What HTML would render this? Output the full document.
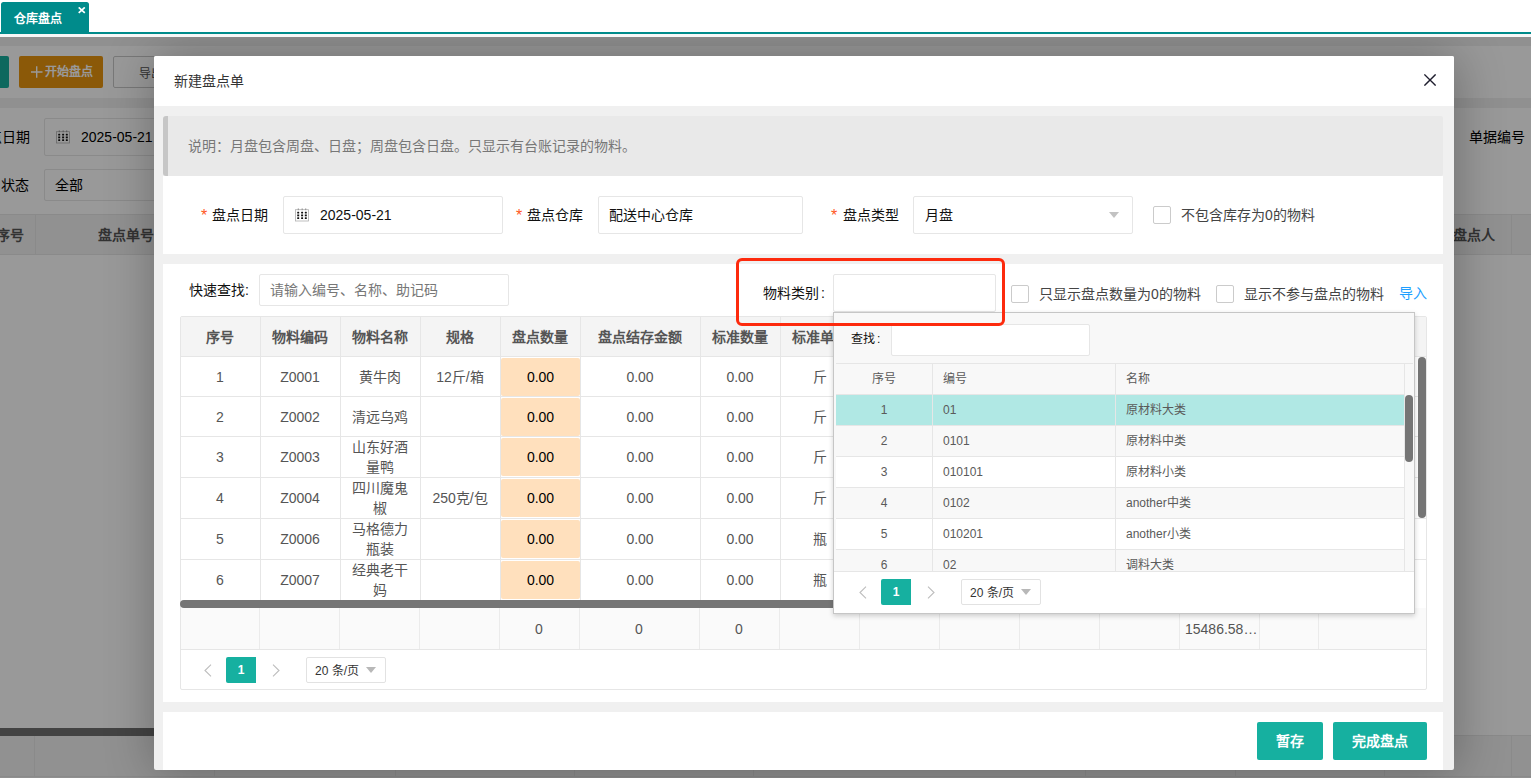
<!DOCTYPE html>
<html lang="zh-CN">
<head>
<meta charset="utf-8">
<title>仓库盘点</title>
<style>
*{box-sizing:border-box;margin:0;padding:0}
html,body{width:1531px;height:778px;overflow:hidden;background:#fff}
body{font-family:"Liberation Sans",sans-serif;font-size:14px;color:#333;position:relative}
.a{position:absolute}
.t{position:absolute;white-space:nowrap;line-height:20px;height:20px}
.b{font-weight:bold}
/* page behind */
#tab{left:1px;top:2px;width:88px;height:31px;background:#008b8b;border-radius:2.5px 2.5px 0 0}
#tabline{left:0;top:32px;width:1531px;height:2px;background:#008b8b}
#page{left:0;top:0;width:1531px;height:778px;background:#f0f0f0;overflow:hidden;clip-path:inset(37px 0 0 0)}
#layer{left:0;top:0;width:1531px;height:778px;clip-path:inset(37px 0 0 0)}
#mask{left:0;top:37px;width:1531px;height:741px;background:rgba(0,0,0,.4)}
.card{position:absolute;background:#fff}
.inp{position:absolute;background:#fff;border:1px solid #e6e6e6;border-radius:2px}
.btn{position:absolute;border-radius:2px;color:#fff;text-align:center}
/* modal */
#modal{left:154px;top:56px;width:1300px;height:714px;background:#f0f0f0;border-radius:2px;box-shadow:1px 1px 50px rgba(0,0,0,.3)}
.lbl{color:#111}
.star{color:#ff5722;font-size:16px}
.cb{position:absolute;width:18px;height:18px;border:1px solid #cbcbcb;border-radius:2px;background:#fff}
.tri{position:absolute;width:0;height:0;border-left:5.5px solid transparent;border-right:5.5px solid transparent;border-top:6px solid #c2c2c2}
.vl{position:absolute;width:1px;background:#e6e6e6}
.hl{position:absolute;height:1px;background:#e6e6e6}
.c{position:absolute;text-align:center;white-space:nowrap;line-height:20px;color:#555}
.or{position:absolute;left:501px;width:79px;height:38px;background:#ffe0bd;border-radius:2px;color:#000;text-align:center;line-height:38px}
.pg1{position:absolute;width:30px;height:26px;background:#16b0a0;color:#fff;font-weight:bold;font-size:12px;line-height:26px;text-align:center;border-radius:2px 0 0 2px}
.pgs{position:absolute;width:80px;height:26px;border:1px solid #e2e2e2;border-radius:2px;background:#fff;font-size:12px;line-height:26px;color:#333;padding-left:8px}
.s12{font-size:12px;color:#5a5a5a}
</style>
</head>
<body>
<!-- tab bar -->
<div class="a" id="tab"></div>
<div class="t b" style="left:14px;top:8.5px;font-size:12px;color:#fff">仓库盘点</div>
<svg class="a" style="left:78px;top:7px" width="8" height="7" viewBox="0 0 8 7"><path d="M0.7 0.4L6.8 5.9M6.8 0.4L0.7 5.9" stroke="#fff" stroke-width="1.7" fill="none"/></svg>
<div class="a" id="tabline"></div>
<div class="a" style="left:0;top:34px;width:1531px;height:3px;background:#f7f7f7"></div>

<!-- page behind modal -->
<div class="a" id="page">
<div class="card" style="left:0;top:46px;width:1531px;height:52px"></div>
<div class="btn" style="left:-60px;top:56px;width:69px;height:32px;background:#17ad9d"></div>
<div class="btn b" style="left:19px;top:56px;width:84px;height:32px;background:#e8940e;font-size:12px;line-height:32px;padding-left:16px">开始盘点</div>
<svg class="a" style="left:31px;top:66px" width="12" height="12" viewBox="0 0 12 12"><path d="M0 6H11.5M5.7 0.3V11.7" stroke="#fff" stroke-width="1.4" fill="none"/></svg>
<div class="a" style="left:113px;top:56px;width:80px;height:32px;border:1px solid #c9c9c9;border-radius:2px;background:#fff"></div>
<div class="t" style="left:139px;top:63.5px;font-size:12px;color:#555">导出</div>
<div class="card" style="left:0;top:108px;width:1531px;height:668px"></div>
<div class="t" style="left:-26px;top:127px;color:#000">盘点日期</div>
<div class="inp" style="left:44px;top:118px;width:220px;height:38px"></div>
<svg class="a" style="left:56px;top:130px" width="14" height="14" viewBox="0 0 14 14"><rect x="0.5" y="1.7" width="13" height="11.3" fill="none" stroke="#b0b0b0" stroke-width="0.8"/><g fill="#111"><rect x="2.2" y="3.8" width="2" height="1.7" rx=".5"/><rect x="6.1" y="3.8" width="2" height="1.7" rx=".5"/><rect x="9.8" y="3.8" width="2" height="1.7" rx=".5"/><rect x="2.2" y="6.5" width="2" height="1.8"/><rect x="6.1" y="6.5" width="2" height="1.8"/><rect x="9.8" y="6.5" width="2" height="1.8"/><rect x="2.2" y="9.3" width="2" height="1.7" rx=".5"/><rect x="6.1" y="9.3" width="2" height="1.7" rx=".5"/><rect x="9.8" y="9.3" width="2" height="1.7" rx=".5"/></g><g fill="#888"><rect x="2.8" y="0.4" width=".9" height="1.8"/><rect x="6.7" y="0.4" width=".9" height="1.8"/><rect x="10.3" y="0.4" width=".9" height="1.8"/></g></svg>
<div class="t" style="left:81px;top:127px;color:#000">2025-05-21</div>
<div class="t" style="left:1px;top:175px;color:#000">状态</div>
<div class="inp" style="left:44px;top:169px;width:220px;height:32px"></div>
<div class="t" style="left:55px;top:175px;color:#000">全部</div>
<div class="t" style="left:1469px;top:127px;color:#000">单据编号</div>
<div class="a" style="left:0;top:214px;width:1531px;height:41px;background:#f2f2f2;border-top:1px solid #e6e6e6;border-bottom:1px solid #e6e6e6"></div>
<div class="t b" style="left:-4px;top:225px;color:#555">序号</div>
<div class="t b" style="left:98px;top:225px;color:#555">盘点单号</div>
<div class="t b" style="left:1453px;top:225px;color:#555">盘点人</div>
<div class="vl" style="left:35px;top:214px;height:41px"></div>
<div class="vl" style="left:1511px;top:214px;height:41px"></div>
<div class="a" style="left:0;top:728px;width:1440px;height:8px;background:#707070"></div>
<div class="a" style="left:0;top:736px;width:1531px;height:41px;background:#f2f2f2;border-bottom:1px solid #e6e6e6"></div>
<div class="hl" style="left:1440px;top:735px;width:91px"></div>
<div class="vl" style="left:34px;top:736px;height:40px"></div>
<div class="vl" style="left:214px;top:736px;height:40px"></div>
<div class="vl" style="left:395px;top:736px;height:40px"></div>
<div class="vl" style="left:574px;top:736px;height:40px"></div>
<div class="vl" style="left:753px;top:736px;height:40px"></div>
<div class="vl" style="left:1085px;top:736px;height:40px"></div>
<div class="vl" style="left:1235px;top:736px;height:40px"></div>
<div class="vl" style="left:1384px;top:736px;height:40px"></div>
<div class="vl" style="left:1511px;top:736px;height:40px"></div>
</div>
<div class="a" id="layer">
<div class="a" id="mask"></div>
<div class="a" id="modal"></div>
<div class="card" style="left:154px;top:56px;width:1300px;height:50px;border-radius:2px 2px 0 0"></div>
<div class="t" style="left:174px;top:71px;color:#333">新建盘点单</div>
<svg class="a" style="left:1424px;top:74px" width="12" height="12" viewBox="0 0 12 12"><path d="M0.9 0.9L11.1 11.1M11.1 0.9L0.9 11.1" stroke="#1f1e2e" stroke-width="1.4" stroke-linecap="square" fill="none"/></svg>
<div class="a" style="left:163px;top:116px;width:1280px;height:60px;background:#e9e9e9;border-left:5px solid #c6c6c6;border-radius:3px 2px 2px 3px"></div>
<div class="t" style="left:188px;top:136px;color:#777">说明：月盘包含周盘、日盘；周盘包含日盘。只显示有台账记录的物料。</div>
<div class="card" style="left:163px;top:176px;width:1280px;height:78px"></div>
<div class="t star" style="left:201px;top:206px">*</div>
<div class="t lbl" style="left:212px;top:205px">盘点日期</div>
<div class="inp" style="left:283px;top:196px;width:220px;height:38px"></div>
<svg class="a" style="left:295px;top:208px" width="14" height="14" viewBox="0 0 14 14"><rect x="0.5" y="1.7" width="13" height="11.3" fill="none" stroke="#b0b0b0" stroke-width="0.8"/><g fill="#111"><rect x="2.2" y="3.8" width="2" height="1.7" rx=".5"/><rect x="6.1" y="3.8" width="2" height="1.7" rx=".5"/><rect x="9.8" y="3.8" width="2" height="1.7" rx=".5"/><rect x="2.2" y="6.5" width="2" height="1.8"/><rect x="6.1" y="6.5" width="2" height="1.8"/><rect x="9.8" y="6.5" width="2" height="1.8"/><rect x="2.2" y="9.3" width="2" height="1.7" rx=".5"/><rect x="6.1" y="9.3" width="2" height="1.7" rx=".5"/><rect x="9.8" y="9.3" width="2" height="1.7" rx=".5"/></g><g fill="#888"><rect x="2.8" y="0.4" width=".9" height="1.8"/><rect x="6.7" y="0.4" width=".9" height="1.8"/><rect x="10.3" y="0.4" width=".9" height="1.8"/></g></svg>
<div class="t" style="left:320px;top:205px;color:#111">2025-05-21</div>
<div class="t star" style="left:516px;top:206px">*</div>
<div class="t lbl" style="left:527px;top:205px">盘点仓库</div>
<div class="inp" style="left:598px;top:196px;width:205px;height:38px"></div>
<div class="t" style="left:609px;top:205px;color:#111">配送中心仓库</div>
<div class="t star" style="left:831px;top:206px">*</div>
<div class="t lbl" style="left:843px;top:205px">盘点类型</div>
<div class="inp" style="left:913px;top:196px;width:220px;height:38px"></div>
<div class="t" style="left:925px;top:205px;color:#111">月盘</div>
<div class="tri" style="left:1109px;top:212px"></div>
<div class="cb" style="left:1153px;top:206px"></div>
<div class="t" style="left:1181px;top:205px;color:#444">不包含库存为0的物料</div>
<div class="card" style="left:163px;top:264px;width:1280px;height:438px"></div>
<div class="t lbl" style="left:189px;top:280px">快速查找:</div>
<div class="inp" style="left:259px;top:274px;width:250px;height:32px"></div>
<div class="t" style="left:270px;top:280px;color:#777">请输入编号、名称、助记码</div>
<div class="t lbl" style="left:763px;top:283px">物料类别<span style="margin-left:2px">:</span></div>
<div class="inp" style="left:833px;top:274px;width:163px;height:38px"></div>
<div class="cb" style="left:1011px;top:285px"></div>
<div class="t" style="left:1039px;top:284px;color:#444">只显示盘点数量为0的物料</div>
<div class="cb" style="left:1216px;top:285px"></div>
<div class="t" style="left:1244px;top:284px;color:#444">显示不参与盘点的物料</div>
<div class="t" style="left:1399px;top:283px;color:#1e9fff">导入</div>
<div class="a" style="left:180px;top:316px;width:1247px;height:374px;border:1px solid #e6e6e6;background:#fff;border-radius:2px"></div>
<div class="a" style="left:181px;top:317px;width:1245px;height:39px;background:#f4f4f4"></div>
<div class="vl" style="left:260px;top:317px;height:283px"></div>
<div class="vl" style="left:340px;top:317px;height:283px"></div>
<div class="vl" style="left:420px;top:317px;height:283px"></div>
<div class="vl" style="left:500px;top:317px;height:283px"></div>
<div class="vl" style="left:580px;top:317px;height:283px"></div>
<div class="vl" style="left:700px;top:317px;height:283px"></div>
<div class="vl" style="left:780px;top:317px;height:283px"></div>
<div class="vl" style="left:860px;top:317px;height:283px"></div>
<div class="hl" style="left:181px;top:356px;width:1245px"></div>
<div class="hl" style="left:181px;top:396px;width:1245px"></div>
<div class="hl" style="left:181px;top:436px;width:1245px"></div>
<div class="hl" style="left:181px;top:477px;width:1245px"></div>
<div class="hl" style="left:181px;top:518px;width:1245px"></div>
<div class="hl" style="left:181px;top:559px;width:1245px"></div>
<div class="c b" style="left:180px;width:80px;top:327px">序号</div>
<div class="c b" style="left:260px;width:80px;top:327px">物料编码</div>
<div class="c b" style="left:340px;width:80px;top:327px">物料名称</div>
<div class="c b" style="left:420px;width:80px;top:327px">规格</div>
<div class="c b" style="left:500px;width:80px;top:327px">盘点数量</div>
<div class="c b" style="left:580px;width:120px;top:327px">盘点结存金额</div>
<div class="c b" style="left:700px;width:80px;top:327px">标准数量</div>
<div class="c b" style="left:780px;width:80px;top:327px">标准单位</div>
<div class="c" style="left:180px;width:80px;top:366.5px">1</div>
<div class="c" style="left:260px;width:80px;top:366.5px">Z0001</div>
<div class="c" style="left:340px;width:80px;top:366.5px">黄牛肉</div>
<div class="c" style="left:420px;width:80px;top:366.5px">12斤/箱</div>
<div class="or" style="top:358px">0.00</div>
<div class="c" style="left:580px;width:120px;top:366.5px">0.00</div>
<div class="c" style="left:700px;width:80px;top:366.5px">0.00</div>
<div class="c" style="left:780px;width:80px;top:366.5px">斤</div>
<div class="c" style="left:180px;width:80px;top:406.5px">2</div>
<div class="c" style="left:260px;width:80px;top:406.5px">Z0002</div>
<div class="c" style="left:340px;width:80px;top:406.5px">清远乌鸡</div>
<div class="or" style="top:398px">0.00</div>
<div class="c" style="left:580px;width:120px;top:406.5px">0.00</div>
<div class="c" style="left:700px;width:80px;top:406.5px">0.00</div>
<div class="c" style="left:780px;width:80px;top:406.5px">斤</div>
<div class="c" style="left:180px;width:80px;top:447px">3</div>
<div class="c" style="left:260px;width:80px;top:447px">Z0003</div>
<div class="c" style="left:340px;width:80px;top:437px">山东好酒<br>量鸭</div>
<div class="or" style="top:438px">0.00</div>
<div class="c" style="left:580px;width:120px;top:447px">0.00</div>
<div class="c" style="left:700px;width:80px;top:447px">0.00</div>
<div class="c" style="left:780px;width:80px;top:447px">斤</div>
<div class="c" style="left:180px;width:80px;top:488px">4</div>
<div class="c" style="left:260px;width:80px;top:488px">Z0004</div>
<div class="c" style="left:340px;width:80px;top:478px">四川魔鬼<br>椒</div>
<div class="c" style="left:420px;width:80px;top:488px">250克/包</div>
<div class="or" style="top:479px">0.00</div>
<div class="c" style="left:580px;width:120px;top:488px">0.00</div>
<div class="c" style="left:700px;width:80px;top:488px">0.00</div>
<div class="c" style="left:780px;width:80px;top:488px">斤</div>
<div class="c" style="left:180px;width:80px;top:529px">5</div>
<div class="c" style="left:260px;width:80px;top:529px">Z0006</div>
<div class="c" style="left:340px;width:80px;top:519px">马格德力<br>瓶装</div>
<div class="or" style="top:520px">0.00</div>
<div class="c" style="left:580px;width:120px;top:529px">0.00</div>
<div class="c" style="left:700px;width:80px;top:529px">0.00</div>
<div class="c" style="left:780px;width:80px;top:529px">瓶</div>
<div class="c" style="left:180px;width:80px;top:570px">6</div>
<div class="c" style="left:260px;width:80px;top:570px">Z0007</div>
<div class="c" style="left:340px;width:80px;top:560px">经典老干<br>妈</div>
<div class="or" style="top:561px">0.00</div>
<div class="c" style="left:580px;width:120px;top:570px">0.00</div>
<div class="c" style="left:700px;width:80px;top:570px">0.00</div>
<div class="c" style="left:780px;width:80px;top:570px">瓶</div>
<div class="a" style="left:180px;top:600px;width:1000px;height:8px;background:#757575;border-radius:4px"></div>
<div class="a" style="left:1418px;top:357px;width:8px;height:161px;background:#757575;border-radius:4px"></div>
<div class="a" style="left:181px;top:608px;width:1245px;height:42px;background:#fafafa;border-bottom:1px solid #e6e6e6"></div>
<div class="vl" style="left:259px;top:608px;height:41px;background:#ebebeb"></div>
<div class="vl" style="left:339px;top:608px;height:41px;background:#ebebeb"></div>
<div class="vl" style="left:419px;top:608px;height:41px;background:#ebebeb"></div>
<div class="vl" style="left:499px;top:608px;height:41px;background:#ebebeb"></div>
<div class="vl" style="left:579px;top:608px;height:41px;background:#ebebeb"></div>
<div class="vl" style="left:699px;top:608px;height:41px;background:#ebebeb"></div>
<div class="vl" style="left:779px;top:608px;height:41px;background:#ebebeb"></div>
<div class="vl" style="left:859px;top:608px;height:41px;background:#ebebeb"></div>
<div class="vl" style="left:939px;top:608px;height:41px;background:#ebebeb"></div>
<div class="vl" style="left:1019px;top:608px;height:41px;background:#ebebeb"></div>
<div class="vl" style="left:1099px;top:608px;height:41px;background:#ebebeb"></div>
<div class="vl" style="left:1179px;top:608px;height:41px;background:#ebebeb"></div>
<div class="vl" style="left:1259px;top:608px;height:41px;background:#ebebeb"></div>
<div class="vl" style="left:1318px;top:608px;height:41px;background:#ebebeb"></div>
<div class="c" style="left:499px;width:80px;top:619px">0</div>
<div class="c" style="left:579px;width:120px;top:619px">0</div>
<div class="c" style="left:699px;width:80px;top:619px">0</div>
<div class="t" style="left:1185px;top:619px;color:#555">15486.58…</div>
<svg class="a" style="left:203.5px;top:663.5px" width="8" height="13" viewBox="0 0 8 13"><path d="M7 0.7L1 6.5L7 12.3" stroke="#bdbdbd" stroke-width="1.1" fill="none"/></svg>
<div class="pg1" style="left:226px;top:657px">1</div>
<svg class="a" style="left:271.5px;top:663.5px" width="8" height="13" viewBox="0 0 8 13"><path d="M1 0.7L7 6.5L1 12.3" stroke="#bdbdbd" stroke-width="1.1" fill="none"/></svg>
<div class="pgs" style="left:306px;top:657px">20 条/页</div>
<div class="tri" style="left:366px;top:667px;border-left-width:5.5px;border-right-width:5.5px;border-top-width:6px;border-top-color:#b8b8b8"></div>

<div class="a" style="left:833px;top:312px;width:582px;height:302px;background:#f8f8f8;border:1px solid #c6c6c6;box-shadow:0 2px 5px rgba(0,0,0,.18)"></div>
<div class="t" style="left:851px;top:329px;font-size:12px;color:#111">查找<span style="margin-left:2px">:</span></div>
<div class="inp" style="left:891px;top:324px;width:199px;height:32px"></div>
<div class="a" style="left:836px;top:363px;width:577px;height:208px;overflow:hidden;border-top:1px solid #e6e6e6">
<div class="a" style="left:0;top:31px;width:568px;height:31px;background:#b0e8e4;border-bottom:1px solid #e6e6e6"></div>
<div class="a" style="left:0;top:62px;width:568px;height:31px;background:#f8f8f8;border-bottom:1px solid #e6e6e6"></div>
<div class="a" style="left:0;top:93px;width:568px;height:31px;background:#fff;border-bottom:1px solid #e6e6e6"></div>
<div class="a" style="left:0;top:124px;width:568px;height:31px;background:#f8f8f8;border-bottom:1px solid #e6e6e6"></div>
<div class="a" style="left:0;top:155px;width:568px;height:31px;background:#fff;border-bottom:1px solid #e6e6e6"></div>
<div class="a" style="left:0;top:186px;width:568px;height:31px;background:#f8f8f8;border-bottom:1px solid #e6e6e6"></div>
<div class="hl" style="left:0;top:30px;width:568px"></div>
<div class="vl" style="left:96px;top:0;height:208px"></div>
<div class="vl" style="left:279px;top:0;height:208px"></div>
<div class="vl" style="left:568px;top:0;height:208px"></div>
<div class="c s12" style="left:0;width:96px;top:5px">序号</div>
<div class="t s12" style="left:107px;top:5px">编号</div>
<div class="t s12" style="left:290px;top:5px">名称</div>
<div class="c s12" style="left:0;width:96px;top:36px">1</div>
<div class="t s12" style="left:107px;top:36px">01</div>
<div class="t s12" style="left:290px;top:36px">原材料大类</div>
<div class="c s12" style="left:0;width:96px;top:67px">2</div>
<div class="t s12" style="left:107px;top:67px">0101</div>
<div class="t s12" style="left:290px;top:67px">原材料中类</div>
<div class="c s12" style="left:0;width:96px;top:98px">3</div>
<div class="t s12" style="left:107px;top:98px">010101</div>
<div class="t s12" style="left:290px;top:98px">原材料小类</div>
<div class="c s12" style="left:0;width:96px;top:129px">4</div>
<div class="t s12" style="left:107px;top:129px">0102</div>
<div class="t s12" style="left:290px;top:129px">another中类</div>
<div class="c s12" style="left:0;width:96px;top:160px">5</div>
<div class="t s12" style="left:107px;top:160px">010201</div>
<div class="t s12" style="left:290px;top:160px">another小类</div>
<div class="c s12" style="left:0;width:96px;top:191px">6</div>
<div class="t s12" style="left:107px;top:191px">02</div>
<div class="t s12" style="left:290px;top:191px">调料大类</div>
</div>
<div class="a" style="left:1405px;top:395px;width:8px;height:67px;background:#757575;border-radius:4px"></div>
<div class="a" style="left:834px;top:571px;width:580px;height:42px;background:#fff;border-top:1px solid #e6e6e6"></div>
<svg class="a" style="left:858.5px;top:585.5px" width="8" height="13" viewBox="0 0 8 13"><path d="M7 0.7L1 6.5L7 12.3" stroke="#bdbdbd" stroke-width="1.1" fill="none"/></svg>
<div class="pg1" style="left:881px;top:579px">1</div>
<svg class="a" style="left:926.5px;top:585.5px" width="8" height="13" viewBox="0 0 8 13"><path d="M1 0.7L7 6.5L1 12.3" stroke="#bdbdbd" stroke-width="1.1" fill="none"/></svg>
<div class="pgs" style="left:961px;top:579px">20 条/页</div>
<div class="tri" style="left:1021px;top:589px;border-left-width:5.5px;border-right-width:5.5px;border-top-width:6px;border-top-color:#b8b8b8"></div>
<div class="a" style="left:736px;top:258px;width:269px;height:67.6px;border:3.6px solid #fd2a0d;border-radius:6px"></div>
<div class="card" style="left:163px;top:712px;width:1280px;height:58px"></div>
<div class="btn b" style="left:1257px;top:722px;width:66px;height:38px;line-height:38px;background:#16b0a0">暂存</div>
<div class="btn b" style="left:1333px;top:722px;width:94px;height:38px;line-height:38px;background:#16b0a0">完成盘点</div>
</div>
</body>
</html>
